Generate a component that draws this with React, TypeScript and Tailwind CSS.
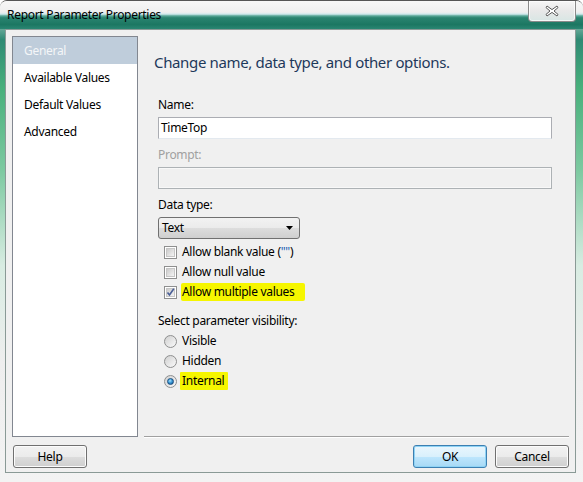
import React from "react";

const pages = ["General", "Available Values", "Default Values", "Advanced"];

function Checkbox({ checked }: { checked?: boolean }) {
	return (
		<span className="relative flex h-[13px] w-[13px] shrink-0 items-center justify-center border border-[#8e8f8f] bg-white">
			<span className="flex h-[9px] w-[9px] items-center justify-center border border-[#c6c6c6] bg-gradient-to-br from-[#cbcbcb] to-[#f4f4f4]">
				{checked && (
					<svg width="9" height="9" viewBox="0 0 9 9" className="overflow-visible">
						<path d="M1.5 4.5 L3.5 7 L7.8 0.8" fill="none" stroke="#4a5f97" strokeWidth="1.6" />
					</svg>
				)}
			</span>
		</span>
	);
}

function Radio({ checked }: { checked?: boolean }) {
	return (
		<span className="flex h-[13px] w-[13px] shrink-0 items-center justify-center rounded-full border border-[#8e8f8f] bg-gradient-to-br from-[#d0d0d0] to-[#fafafa]">
			{checked && (
				<span className="h-[7px] w-[7px] rounded-full border border-[#1b4f80] bg-[radial-gradient(circle_at_40%_35%,#a8e3ff_0%,#3c9ad6_45%,#0f4c8a_100%)]" />
			)}
		</span>
	);
}

function Button({ label, focused }: { label: string; focused?: boolean }) {
	return (
		<div
			className={
				"flex h-[23px] w-[74px] items-center justify-center rounded-[3px] border text-[12px] text-black " +
				(focused
					? "border-[#3c7fb1] bg-[linear-gradient(to_bottom,#eaf6fd_0%,#d9f0fc_50%,#bee6fd_50%,#a7d9f5_100%)] shadow-[inset_0_0_0_1px_#8fd3f5]"
					: "border-[#707070] bg-[linear-gradient(to_bottom,#f2f2f2_0%,#ebebeb_50%,#dddddd_50%,#cfcfcf_100%)] shadow-[inset_0_0_0_1px_#fcfcfc]")
			}
		>
			{label}
		</div>
	);
}

export default function App() {
	return (
		<div className="relative flex h-[482px] w-[583px] flex-col overflow-hidden rounded-t-[7px] border-t border-[#555] bg-[linear-gradient(to_bottom,#f4f4f4_0%,#2f8a74_8%,#48b07c_18%,#7cc9a0_35%,#d8ece2_55%,#eeeeee_75%,#f3f3f3_100%)] font-['Noto_Sans',sans-serif] text-[12px] tracking-[-0.3px] text-black">
			{/* title bar */}
			<div className="flex h-[28px] shrink-0 items-center bg-[linear-gradient(to_bottom,#f7f7f7_0%,#efefef_40%,#cfe9ec_47%,#5aa898_53%,#2a8470_60%,#1c7762_84%,#2a8672_100%)] pl-[7px]">
				<span className="text-[12px] leading-none text-black">Report Parameter Properties</span>
			</div>
			<div className="absolute right-[7px] top-0 flex h-[21px] w-[48px] items-center justify-center rounded-b-[4px] border border-t-0 border-[#8a8a8a] bg-[linear-gradient(to_bottom,#f6f6f6_0%,#e8e8e8_50%,#d8e6e4_100%)] shadow-[inset_0_0_0_1px_rgba(255,255,255,0.7)]">
				<svg width="14" height="12" viewBox="0 0 14 12">
					<path d="M2 1 L7 4.6 L12 1 L13 2.6 L9 6 L13 9.4 L12 11 L7 7.4 L2 11 L1 9.4 L5 6 L1 2.6 Z" fill="#fff" stroke="#5a5a5a" strokeWidth="1" strokeLinejoin="round" />
				</svg>
			</div>

			{/* client */}
			<div className="ml-[5px] mr-[7px] mb-[9px] flex flex-1 flex-col border border-[#8a9a96] bg-[#f0f0f0]">
				<div className="ml-[6px] mr-[6px] mt-[6px] flex h-[401px]">
					<div className="flex w-[126px] flex-col border border-[#828790] bg-white">
						{pages.map((p, i) => (
							<div
								key={p}
								className={
									"flex h-[27px] items-center pl-[11px] pt-[1px] " +
									(i === 0 ? "bg-[#bfcddb] text-[#f4f6f8]" : "text-black")
								}
							>
								{p}
							</div>
						))}
					</div>
					<div className="ml-[6px] flex flex-1 flex-col border-b border-[#a0a0a0] shadow-[0_1px_0_#ffffff]">
						<div className="ml-[10px] mt-[16px] text-[15px] leading-[20px] tracking-[-0.35px] text-[#1e395b]">
							Change name, data type, and other options.
						</div>
						<div className="ml-[14px] mr-[17px] mt-[25px] flex flex-col">
							<div className="h-[16px] leading-[16px]">Name:</div>
							<div className="mt-[4px] flex h-[22px] items-center border border-[#abadb3] border-b-[#e3e9ef] bg-white pl-[2px]">
								TimeTop
							</div>
							<div className="mt-[8px] h-[16px] leading-[16px] text-[#a0a0a0]">Prompt:</div>
							<div className="mt-[4px] h-[22px] border border-[#adb2b5] bg-[#f0f0f0] shadow-[inset_0_0_0_1px_#f8f8f8]" />
							<div className="mt-[8px] h-[16px] leading-[16px]">Data type:</div>
							<div className="mt-[4px] flex h-[22px] w-[142px] items-center justify-between rounded-[3px] border border-[#707070] bg-[linear-gradient(to_bottom,#f2f2f2_0%,#ebebeb_50%,#dddddd_50%,#cfcfcf_100%)] pl-[3px] pr-[6px]">
								<span>Text</span>
								<svg width="7" height="4" viewBox="0 0 7 4">
									<path d="M0 0 H7 L3.5 4 Z" fill="#000" />
								</svg>
							</div>
							<div className="mt-[3px] flex h-[20px] items-center gap-[5px] pl-[6px]">
								<Checkbox />
								<span>
									Allow blank value (<span className="text-[#1a5fb4]">""</span>)
								</span>
							</div>
							<div className="flex h-[20px] items-center gap-[5px] pl-[6px]">
								<Checkbox />
								<span>Allow null value</span>
							</div>
							<div className="flex h-[20px] items-center gap-[5px] pl-[6px]">
								<Checkbox checked />
								<span className="-ml-[1px] rounded-[2px] bg-[#f6f600] pl-[1px] pr-[10px] leading-[18px]">
									Allow multiple values
								</span>
							</div>
							<div className="mt-[11px] h-[16px] leading-[16px]">Select parameter visibility:</div>
							<div className="mt-[2px] flex h-[20px] items-center gap-[5px] pl-[6px]">
								<Radio />
								<span>Visible</span>
							</div>
							<div className="flex h-[20px] items-center gap-[5px] pl-[6px]">
								<Radio />
								<span>Hidden</span>
							</div>
							<div className="flex h-[20px] items-center gap-[5px] pl-[6px]">
								<Radio checked />
								<span className="-ml-[2px] rounded-[1px] bg-[#f6f600] pl-[2px] pr-[4px] leading-[18px]">
									Internal
								</span>
							</div>
						</div>
					</div>
				</div>
				<div className="mt-[8px] flex items-center pl-[7px] pr-[6px]">
					<Button label="Help" />
					<div className="flex-1" />
					<Button label="OK" focused />
					<div className="w-[8px]" />
					<Button label="Cancel" />
				</div>
			</div>
		</div>
	);
}
